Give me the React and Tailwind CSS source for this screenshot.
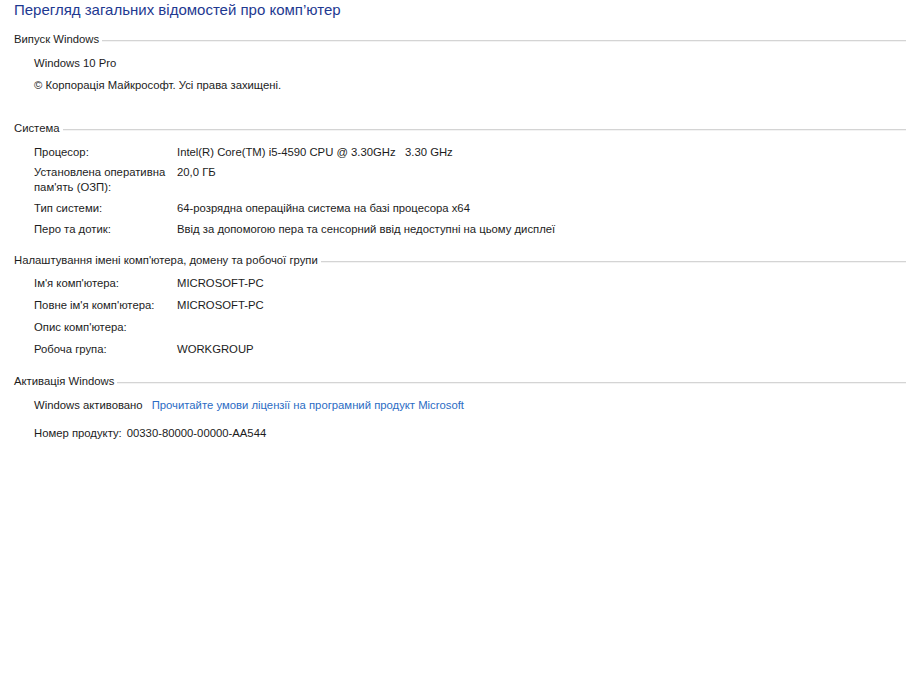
import React from 'react';

const Section = ({ title, className = '' }) => (
    <div className={`flex items-center h-[22px] leading-[22px] ${className}`}>
        <span className="whitespace-nowrap">{title}</span>
        <div className="flex-1 ml-[3px] mt-[3px] border-t border-[#d4d4d4] border-b border-b-[#f3f3f3]" />
    </div>
);

const Row = ({ label, value, className = '' }) => (
    <div className={`flex pl-[20px] h-[22px] leading-[22px] ${className}`}>
        <div className="w-[143px] shrink-0">{label}</div>
        <div>{value}</div>
    </div>
);

const App = () => {
    return (
        <div
            className="min-h-screen w-full bg-white text-[#1c1c1c] text-[11.3px] pl-[14px]"
            style={{ fontFamily: '"Liberation Sans", Arial, sans-serif' }}
        >
            <h1 className="text-[15px] leading-[20px] text-[#1e3991]">Перегляд загальних відомостей про комп’ютер</h1>

            <Section title="Випуск Windows" className="mt-[8px]" />
            <div className="pl-[20px] h-[22px] leading-[22px] mt-[2px]">Windows 10 Pro</div>
            <div className="pl-[20px] h-[22px] leading-[22px]">© Корпорація Майкрософт. Усі права захищені.</div>

            <Section title="Система" className="mt-[21px]" />
            <Row label="Процесор:" value="Intel(R) Core(TM) i5-4590 CPU @ 3.30GHz   3.30 GHz" className="mt-[2px] whitespace-pre" />
            <div className="flex pl-[20px] leading-[15px] pt-[1.5px] pb-[2.5px]">
                <div className="w-[143px] shrink-0">Установлена оперативна пам'ять (ОЗП):</div>
                <div>20,0 ГБ</div>
            </div>
            <Row label="Тип системи:" value="64-розрядна операційна система на базі процесора x64" />
            <Row label="Перо та дотик:" value="Ввід за допомогою пера та сенсорний ввід недоступні на цьому дисплеї" className="-mt-[1px]" />

            <Section title="Налаштування імені комп'ютера, домену та робочої групи" className="mt-[9px]" />
            <Row label="Ім'я комп'ютера:" value="MICROSOFT-PC" className="mt-[1px]" />
            <Row label="Повне ім'я комп'ютера:" value="MICROSOFT-PC" />
            <Row label="Опис комп'ютера:" value="" />
            <Row label="Робоча група:" value="WORKGROUP" />

            <Section title="Активація Windows" className="mt-[10px]" />
            <div className="flex pl-[20px] h-[22px] leading-[22px] mt-[2px]">
                <span>Windows активовано</span>
                <a href="#" className="ml-[9px] text-[#2b6cc4]">Прочитайте умови ліцензії на програмний продукт Microsoft</a>
            </div>
            <div className="flex pl-[20px] h-[22px] leading-[22px] mt-[6px]">
                <span>Номер продукту:</span>
                <span className="ml-[5px]">00330-80000-00000-AA544</span>
            </div>
        </div>
    );
};

export default App;
